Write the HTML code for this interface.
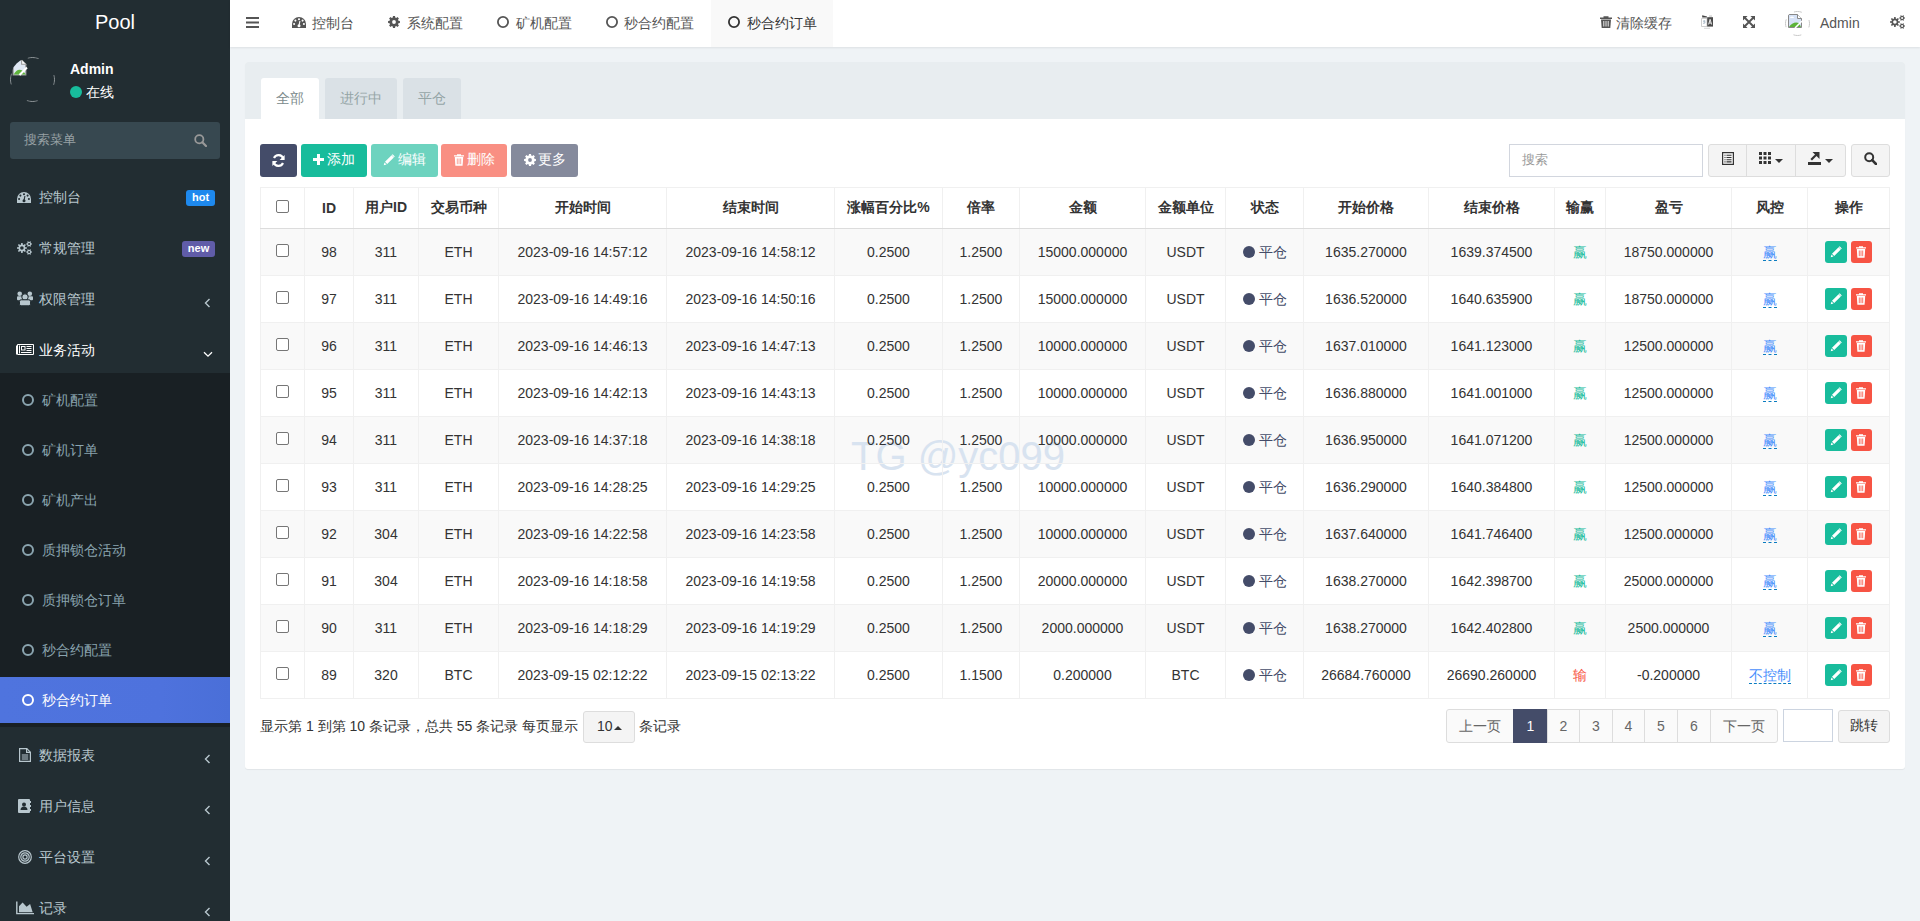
<!DOCTYPE html>
<html><head><meta charset="utf-8"><title>秒合约订单</title>
<style>
*{box-sizing:border-box}
html,body{margin:0;padding:0}
body{width:1920px;height:921px;overflow:hidden;position:relative;background:#eff3f6;font-family:"Liberation Sans",sans-serif;font-size:14px;color:#333}
.abs{position:absolute}
svg{display:block}
/* sidebar */
#sb{position:absolute;left:0;top:0;width:230px;height:921px;background:#222d32}
#sb .logo{position:absolute;left:0;top:0;width:230px;height:47px;color:#fff;font-size:20px;text-align:center;line-height:44px}
.mi{position:absolute;left:0;width:230px;height:46px;color:#b8c7ce;font-size:14px}
.mi .t{position:absolute;left:39px;top:13px;line-height:20px;white-space:nowrap}
.mi .ic{position:absolute;left:17px;top:16px}
.mi .chev{position:absolute;left:203px;top:20px}
.sub{position:absolute;left:0;width:230px;background:#192024}
.si{position:absolute;left:0;width:230px;height:46px;color:#8aa4af;font-size:14px}
.si .t{position:absolute;left:42px;top:13px;line-height:20px;white-space:nowrap}
.si .ci{position:absolute;left:22px;top:17px;width:12px;height:12px;border:2px solid #8aa4af;border-radius:50%}
/* header */
#hd{position:absolute;left:230px;top:0;width:1690px;height:47px;background:#fff;box-shadow:0 1px 2px rgba(0,0,0,.08)}
.ht{position:absolute;top:12.5px;line-height:20px;font-size:14px;color:#555;white-space:nowrap}

/* panel */
#pn{position:absolute;left:245px;top:62px;width:1660px;height:707px;background:#fff;border-radius:3px;box-shadow:0 1px 1px rgba(0,0,0,.06)}
#pn .ph{position:absolute;left:0;top:0;width:1660px;height:57px;background:#e8edf0;border-radius:3px 3px 0 0}
.tab{position:absolute;top:16px;height:41px;background:#dae1e6;border-radius:3px 3px 0 0;color:#95a5a6;font-size:14px;line-height:20px;padding-top:10px;text-align:center}
.btn{position:absolute;top:82px;height:33px;border-radius:3px;color:#fff;font-size:14px;line-height:20px}
table.tb{position:absolute;z-index:2;left:15px;top:125px;border-collapse:collapse;table-layout:fixed;width:1630px}
.tb th,.tb td{border:1px solid #f0f0f0;text-align:center;white-space:nowrap;padding:0;font-size:14px;color:#333}
.tb th{height:41px;font-weight:bold;border-bottom:1px solid #dcdcdc}
.tb td{height:47px}
.tb tr.odd td{background:transparent}
.cb{display:inline-block;width:13px;height:13px;border:1px solid #767676;border-radius:2px;background:#fff;vertical-align:middle;position:relative;top:-3px}
.dot{display:inline-block;width:12px;height:12px;border-radius:50%;background:#444c69;vertical-align:middle;margin-right:4px;position:relative;top:0}
.lk{color:#4a8ffc;border-bottom:1px dashed #0a7cc0;position:relative;top:1px}
.ab{display:inline-block;width:22px;height:22px;border-radius:3px;vertical-align:middle;position:relative}
.ab svg{position:absolute;left:5px;top:5px}
</style></head>
<body>
<div id="sb">
  <div class="logo">Pool</div>
  <!-- user panel -->
  <div class="abs" style="left:10px;top:57px;width:45px;height:45px;border-radius:50%;overflow:hidden">
    <svg class="abs" style="left:0;top:0" width="45" height="45" viewBox="0 0 45 45"><circle cx="22.5" cy="22.5" r="22" fill="none" stroke="#9aa0a3" stroke-width="1" stroke-dasharray="11 23.56" stroke-dashoffset="5.5"/></svg>
    <svg class="abs" style="left:1px;top:2px" width="17" height="17" viewBox="0 0 16 16"><path d="M2 1h8l4 4v10H2z" fill="#dfe7f3" stroke="#999" stroke-width="1"/><path d="M10 1v4h4" fill="#fff" stroke="#999" stroke-width="1"/><path d="M2.5 14.5 Q6 8 11 11 L14 14.5z" fill="#5fb33b"/><path d="M8 15 L15 8" stroke="#fff" stroke-width="2"/></svg>
  </div>
  <div class="abs" style="left:70px;top:60px;color:#fff;font-weight:bold;font-size:14px;line-height:18px">Admin</div>
  <div class="abs" style="left:70px;top:86px;width:12px;height:12px;border-radius:50%;background:#18bc9c"></div>
  <div class="abs" style="left:86px;top:83px;color:#fff;font-size:14px;line-height:18px">在线</div>
  <!-- search -->
  <div class="abs" style="left:10px;top:122px;width:210px;height:37px;background:#374850;border-radius:3px"></div>
  <div class="abs" style="left:24px;top:131px;color:#98a1a5;font-size:13px;line-height:18px">搜索菜单</div>
  <svg class="abs" style="left:194px;top:134px" width="13" height="13" viewBox="0 0 13 13"><circle cx="5.3" cy="5.3" r="4.1" fill="none" stroke="#999" stroke-width="1.8"/><path d="M8.3 8.3 L12 12" stroke="#999" stroke-width="2.2" stroke-linecap="round"/></svg>

  <div class="mi" style="top:174px"><svg class="ic" style="top:18px" width="14" height="11" viewBox="0 0 14 11"><path d="M0 11V7A7 7 0 0 1 14 7V11z" fill="#b8c7ce"/><g fill="#222d32"><circle cx="7" cy="2.2" r="1.05"/><circle cx="3.4" cy="3.6" r="1.05"/><circle cx="10.6" cy="3.6" r="1.05"/><circle cx="2.1" cy="7" r="1.05"/><circle cx="11.9" cy="7" r="1.05"/><circle cx="7" cy="8.7" r="1.5"/></g><path d="M7 8.7L7.9 4" stroke="#222d32" stroke-width="1.1"/></svg><span class="t">控制台</span>
    <div class="abs" style="left:186px;top:16px;width:29px;height:16px;background:#1e89ee;border-radius:3px;color:#fff;font-weight:bold;font-size:11px;line-height:15px;text-align:center">hot</div></div>
  <div class="mi" style="top:225px"><svg class="ic" style="top:16px" width="15" height="14" viewBox="0 0 15 14"><path fill-rule="evenodd" d="M9.84 6.22 L9.84 7.78 L8.30 7.85 L7.90 8.80 L8.95 9.94 L7.84 11.05 L6.70 10.00 L5.75 10.40 L5.68 11.94 L4.12 11.94 L4.05 10.40 L3.10 10.00 L1.96 11.05 L0.85 9.94 L1.90 8.80 L1.50 7.85 L-0.04 7.78 L-0.04 6.22 L1.50 6.15 L1.90 5.20 L0.85 4.06 L1.96 2.95 L3.10 4.00 L4.05 3.60 L4.12 2.06 L5.68 2.06 L5.75 3.60 L6.70 4.00 L7.84 2.95 L8.95 4.06 L7.90 5.20 L8.30 6.15Z M6.70 7.00 A1.8 1.8 0 1 0 3.10 7.00 A1.8 1.8 0 1 0 6.70 7.00Z M14.94 2.40 L14.94 3.60 L13.99 3.64 L13.60 4.32 L14.04 5.16 L13.00 5.76 L12.49 4.96 L11.71 4.96 L11.20 5.76 L10.16 5.16 L10.60 4.32 L10.21 3.64 L9.26 3.60 L9.26 2.40 L10.21 2.36 L10.60 1.68 L10.16 0.84 L11.20 0.24 L11.71 1.04 L12.49 1.04 L13.00 0.24 L14.04 0.84 L13.60 1.68 L13.99 2.36Z M13.10 3.00 A1.0 1.0 0 1 0 11.10 3.00 A1.0 1.0 0 1 0 13.10 3.00Z M14.94 10.40 L14.94 11.60 L13.99 11.64 L13.60 12.32 L14.04 13.16 L13.00 13.76 L12.49 12.96 L11.71 12.96 L11.20 13.76 L10.16 13.16 L10.60 12.32 L10.21 11.64 L9.26 11.60 L9.26 10.40 L10.21 10.36 L10.60 9.68 L10.16 8.84 L11.20 8.24 L11.71 9.04 L12.49 9.04 L13.00 8.24 L14.04 8.84 L13.60 9.68 L13.99 10.36Z M13.10 11.00 A1.0 1.0 0 1 0 11.10 11.00 A1.0 1.0 0 1 0 13.10 11.00Z" fill="#b8c7ce"/></svg><span class="t">常规管理</span>
    <div class="abs" style="left:182px;top:16px;width:33px;height:16px;background:#605ca8;border-radius:3px;color:#fff;font-weight:bold;font-size:11px;line-height:15px;text-align:center">new</div></div>
  <div class="mi" style="top:276px"><svg class="ic" style="left:17px;top:291px;top:15px" width="16" height="15" viewBox="0 0 16 15"><g fill="#b8c7ce"><circle cx="2.7" cy="2.8" r="2.3"/><circle cx="12.8" cy="2.8" r="2.3"/><rect x="0" y="5.2" width="5" height="4" rx="1"/><rect x="11" y="5.2" width="5" height="4" rx="1"/></g><g fill="#b8c7ce" stroke="#222d32" stroke-width="1"><circle cx="8" cy="6" r="3.2"/><rect x="2.5" y="8.8" width="11" height="6" rx="1.6"/></g></svg><span class="t">权限管理</span>
    <svg class="chev" style="left:204px;top:22px" width="7" height="10" viewBox="0 0 7 10"><path d="M5.5 1 L1.5 5 L5.5 9" fill="none" stroke="#b8c7ce" stroke-width="1.4"/></svg></div>
  <div class="mi" style="top:327px;color:#fff"><svg class="ic" style="left:16px;top:16px" width="18" height="13" viewBox="0 0 18 13"><g fill="none" stroke="#fff" stroke-width="1"><path d="M1.5 1.5H17.5V11.5H1.5z"/><path d="M0.5 2.5V11.5"/><path d="M3.5 2.5V10.5"/><rect x="5.5" y="3.5" width="3.5" height="3.5"/><path d="M10.5 3.5H15.5M10.5 5.5H15.5M10.5 7.5H15.5M5 9.5H15.5"/></g></svg><span class="t">业务活动</span>
    <svg class="chev" style="left:203px;top:24px" width="10" height="7" viewBox="0 0 10 7"><path d="M1 1.2 L5 5.2 L9 1.2" fill="none" stroke="#fff" stroke-width="1.3"/></svg></div>
  <div class="sub" style="top:373px;height:354px">
    <div class="si" style="top:4px"><span class="ci"></span><span class="t">矿机配置</span></div>
    <div class="si" style="top:54px"><span class="ci"></span><span class="t">矿机订单</span></div>
    <div class="si" style="top:104px"><span class="ci"></span><span class="t">矿机产出</span></div>
    <div class="si" style="top:154px"><span class="ci"></span><span class="t">质押锁仓活动</span></div>
    <div class="si" style="top:204px"><span class="ci"></span><span class="t">质押锁仓订单</span></div>
    <div class="si" style="top:254px"><span class="ci"></span><span class="t">秒合约配置</span></div>
    <div class="si" style="top:304px;background:linear-gradient(to right,#4f74de 0%,#4e72dd 70%,#4a6fd8 100%);color:#fff"><span class="ci" style="border-color:#fff"></span><span class="t">秒合约订单</span></div>
  </div>
  <div class="mi" style="top:732px"><svg class="ic" style="left:19px;top:16px" width="12" height="14" viewBox="0 0 12 14"><g fill="none" stroke="#b8c7ce" stroke-width="1.2"><path d="M.6.6h7.2l3.6 3.6v9.2H.6z"/><path d="M7.6.6v3.8h3.8"/><path d="M2.8 7h6.4M2.8 9h6.4M2.8 11h6.4" stroke-width="1"/></g></svg><span class="t">数据报表</span>
    <svg class="chev" style="left:204px;top:22px" width="7" height="10" viewBox="0 0 7 10"><path d="M5.5 1 L1.5 5 L5.5 9" fill="none" stroke="#b8c7ce" stroke-width="1.4"/></svg></div>
  <div class="mi" style="top:783px"><svg class="ic" style="left:18px;top:16px" width="13" height="14" viewBox="0 0 13 14"><rect x="0" y="0" width="12" height="14" rx="1" fill="#b8c7ce"/><path d="M12 2h1v2h-1zM12 6h1v2h-1zM12 10h1v2h-1z" fill="#b8c7ce"/><circle cx="6" cy="5.5" r="2" fill="#222d32"/><path d="M2.5 11c0-2.2 1.5-3.5 3.5-3.5s3.5 1.3 3.5 3.5z" fill="#222d32"/></svg><span class="t">用户信息</span>
    <svg class="chev" style="left:204px;top:22px" width="7" height="10" viewBox="0 0 7 10"><path d="M5.5 1 L1.5 5 L5.5 9" fill="none" stroke="#b8c7ce" stroke-width="1.4"/></svg></div>
  <div class="mi" style="top:834px"><svg class="ic" style="left:18px;top:16px" width="14" height="14" viewBox="0 0 14 14"><g fill="none" stroke="#b8c7ce" stroke-width="1.2"><circle cx="7" cy="7" r="6.3"/><circle cx="7" cy="7" r="4.2"/><circle cx="7" cy="7" r="2.1"/></g></svg><span class="t">平台设置</span>
    <svg class="chev" style="left:204px;top:22px" width="7" height="10" viewBox="0 0 7 10"><path d="M5.5 1 L1.5 5 L5.5 9" fill="none" stroke="#b8c7ce" stroke-width="1.4"/></svg></div>
  <div class="mi" style="top:885px"><svg class="ic" style="left:16px;top:16px" width="18" height="14" viewBox="0 0 18 14"><path d="M0.8 0.5V12.6H18" fill="none" stroke="#b8c7ce" stroke-width="1.4"/><path d="M3 11.3V5.3L6.6 1.6L10.6 5.8L14.1 3L16.7 11.3Z" fill="#b8c7ce"/></svg><span class="t">记录</span>
    <svg class="chev" style="left:204px;top:22px" width="7" height="10" viewBox="0 0 7 10"><path d="M5.5 1 L1.5 5 L5.5 9" fill="none" stroke="#b8c7ce" stroke-width="1.4"/></svg></div>
</div>
<div id="hd">
  <svg class="abs" style="left:16px;top:17px" width="13" height="11" viewBox="0 0 13 11"><path d="M0 1h13M0 5.5h13M0 10h13" stroke="#555" stroke-width="2"/></svg>
  <svg class="abs" style="left:62px;top:17px" width="14" height="11" viewBox="0 0 14 11"><path d="M0 11V7A7 7 0 0 1 14 7V11z" fill="#555"/><g fill="#fff"><circle cx="7" cy="2.2" r="1.05"/><circle cx="3.4" cy="3.6" r="1.05"/><circle cx="10.6" cy="3.6" r="1.05"/><circle cx="2.1" cy="7" r="1.05"/><circle cx="11.9" cy="7" r="1.05"/><circle cx="7" cy="8.7" r="1.5"/></g><path d="M7 8.7L7.9 4" stroke="#fff" stroke-width="1.1"/></svg>
  <span class="ht" style="left:82px">控制台</span>
  <svg class="abs" style="left:158px;top:16px" width="12" height="12" viewBox="0 0 12 12"><path fill-rule="evenodd" d="M11.91 4.97 L11.91 7.03 L10.43 7.23 L10.00 8.27 L10.91 9.45 L9.45 10.91 L8.27 10.00 L7.23 10.43 L7.03 11.91 L4.97 11.91 L4.77 10.43 L3.73 10.00 L2.55 10.91 L1.09 9.45 L2.00 8.27 L1.57 7.23 L0.09 7.03 L0.09 4.97 L1.57 4.77 L2.00 3.73 L1.09 2.55 L2.55 1.09 L3.73 2.00 L4.77 1.57 L4.97 0.09 L7.03 0.09 L7.23 1.57 L8.27 2.00 L9.45 1.09 L10.91 2.55 L10.00 3.73 L10.43 4.77Z M7.90 6.00 A1.9 1.9 0 1 0 4.10 6.00 A1.9 1.9 0 1 0 7.90 6.00Z" fill="#555"/></svg>
  <span class="ht" style="left:177px">系统配置</span>
  <svg class="abs" style="left:267px;top:16px" width="12" height="12" viewBox="0 0 12 12"><circle cx="6" cy="6" r="5.1" fill="none" stroke="#555" stroke-width="1.8"/></svg>
  <span class="ht" style="left:286px">矿机配置</span>
  <svg class="abs" style="left:376px;top:16px" width="12" height="12" viewBox="0 0 12 12"><circle cx="6" cy="6" r="5.1" fill="none" stroke="#555" stroke-width="1.8"/></svg>
  <span class="ht" style="left:394px">秒合约配置</span>
  <div class="abs" style="left:481px;top:0;width:122px;height:47px;background:#f9f9f9"></div>
  <svg class="abs" style="left:498px;top:16px" width="12" height="12" viewBox="0 0 12 12"><circle cx="6" cy="6" r="5.1" fill="none" stroke="#333" stroke-width="1.8"/></svg>
  <span class="ht" style="left:517px;color:#333">秒合约订单</span>

  <svg class="abs" style="left:1370px;top:16px" width="12" height="12" viewBox="0 0 12 12"><path d="M3.5 1.5V.3h5v1.2H12V3H0V1.5z" fill="#555"/><path d="M1 3.5h10L10.3 12H1.7z" fill="#555"/><path d="M3.8 5v5.5M6 5v5.5M8.2 5v5.5" stroke="#fff" stroke-width=".9"/></svg>
  <span class="ht" style="left:1386px">清除缓存</span>
  <svg class="abs" style="left:1471px;top:15px" width="13" height="14" viewBox="0 0 13 14"><path d="M.5 3.5h5.5v8H.5z" fill="#fff" stroke="#c8c8c8" stroke-width=".9"/><path d="M1.2 0.2L6 1.6V2.6H1.2z" fill="#444"/><rect x="8" y="0.2" width="3" height="2.2" fill="#ddd"/><path d="M6.2 2.2h5.8v9.4H6.2z" fill="#4a4a4a"/><path d="M7.6 9.5L9.1 4.3 10.6 9.5M8.1 8h2" fill="none" stroke="#e8e8e8" stroke-width="1"/><path d="M2 6.2h2.5M3.2 5v3.3M2.2 8.6l2.3-1" fill="none" stroke="#9ab" stroke-width=".7"/><path d="M3 13.3h6" stroke="#ccc" stroke-width=".8"/></svg>
  <svg class="abs" style="left:1513px;top:16px" width="12" height="12" viewBox="0 0 12 12"><path d="M0 0h4.6L0 4.6zM12 0H7.4L12 4.6zM0 12V7.4L4.6 12zM12 12V7.4L7.4 12z" fill="#555"/><path d="M1.5 1.5L10.5 10.5M10.5 1.5L1.5 10.5" stroke="#555" stroke-width="1.9"/></svg>
  <svg class="abs" style="left:1555px;top:11px" width="25" height="25" viewBox="0 0 25 25"><circle cx="12.5" cy="12.5" r="12" fill="none" stroke="#c8c8c8" stroke-width="1" stroke-dasharray="8 10.85" stroke-dashoffset="4"/></svg>
  <div class="abs" style="left:1555px;top:11px;width:25px;height:25px;border-radius:50%;overflow:hidden">
    <svg class="abs" style="left:2px;top:2px" width="16" height="16" viewBox="0 0 16 16"><path d="M1.5 1.5h9l4 4v9h-13z" fill="#d6e2f6" stroke="#888" stroke-width="1"/><path d="M10.5 1.5v4h4" fill="#fff" stroke="#888" stroke-width="1"/><path d="M3 5a2 1.5 0 0 1 4 0z" fill="#fff"/><path d="M2 14 Q6 8 12 10 L14 14z" fill="#5cb338"/><path d="M8 15 L15 8" stroke="#fff" stroke-width="1.6"/></svg>
  </div>
  <span class="ht" style="left:1590px;top:13px">Admin</span>
  <svg class="abs" style="left:1660px;top:15px" width="15" height="14" viewBox="0 0 15 14"><path fill-rule="evenodd" d="M9.84 6.22 L9.84 7.78 L8.30 7.85 L7.90 8.80 L8.95 9.94 L7.84 11.05 L6.70 10.00 L5.75 10.40 L5.68 11.94 L4.12 11.94 L4.05 10.40 L3.10 10.00 L1.96 11.05 L0.85 9.94 L1.90 8.80 L1.50 7.85 L-0.04 7.78 L-0.04 6.22 L1.50 6.15 L1.90 5.20 L0.85 4.06 L1.96 2.95 L3.10 4.00 L4.05 3.60 L4.12 2.06 L5.68 2.06 L5.75 3.60 L6.70 4.00 L7.84 2.95 L8.95 4.06 L7.90 5.20 L8.30 6.15Z M6.70 7.00 A1.8 1.8 0 1 0 3.10 7.00 A1.8 1.8 0 1 0 6.70 7.00Z M14.94 2.40 L14.94 3.60 L13.99 3.64 L13.60 4.32 L14.04 5.16 L13.00 5.76 L12.49 4.96 L11.71 4.96 L11.20 5.76 L10.16 5.16 L10.60 4.32 L10.21 3.64 L9.26 3.60 L9.26 2.40 L10.21 2.36 L10.60 1.68 L10.16 0.84 L11.20 0.24 L11.71 1.04 L12.49 1.04 L13.00 0.24 L14.04 0.84 L13.60 1.68 L13.99 2.36Z M13.10 3.00 A1.0 1.0 0 1 0 11.10 3.00 A1.0 1.0 0 1 0 13.10 3.00Z M14.94 10.40 L14.94 11.60 L13.99 11.64 L13.60 12.32 L14.04 13.16 L13.00 13.76 L12.49 12.96 L11.71 12.96 L11.20 13.76 L10.16 13.16 L10.60 12.32 L10.21 11.64 L9.26 11.60 L9.26 10.40 L10.21 10.36 L10.60 9.68 L10.16 8.84 L11.20 8.24 L11.71 9.04 L12.49 9.04 L13.00 8.24 L14.04 8.84 L13.60 9.68 L13.99 10.36Z M13.10 11.00 A1.0 1.0 0 1 0 11.10 11.00 A1.0 1.0 0 1 0 13.10 11.00Z" fill="#555"/></svg>
</div>
<div id="pn">
<div class="ph"></div>
<div class="tab" style="left:16px;width:58px;background:#fff;color:#7b8a8b">全部</div>
<div class="tab" style="left:80px;width:72px">进行中</div>
<div class="tab" style="left:158px;width:58px">平仓</div>
<div class="btn" style="left:15px;width:37px;background:#444c69"><svg class="abs" style="left:12px;top:10px" width="13" height="13" viewBox="0 0 13 13"><path d="M11.3 4.6A5 5 0 0 0 2 4" fill="none" stroke="#fff" stroke-width="2.2"/><path d="M12.6 1v5H7.6z" fill="#fff"/><path d="M1.7 8.4A5 5 0 0 0 11 9" fill="none" stroke="#fff" stroke-width="2.2"/><path d="M.4 12V7h5z" fill="#fff"/></svg></div>
<div class="btn" style="left:56px;width:66px;background:#18bc9c"><svg class="abs" style="left:12px;top:10px" width="11" height="11" viewBox="0 0 11 11"><path d="M4 0h3v4h4v3H7v4H4V7H0V4h4z" fill="#fff"/></svg><span class="abs" style="left:26px;top:5px;">添加</span></div>
<div class="btn" style="left:126px;width:67px;background:#6dd3bf"><svg class="abs" style="left:12px;top:10px" width="12" height="12" viewBox="0 0 12 12"><path d="M8.6 1.2l2.2 2.2-6.6 6.6-2.2-2.2z M1.5 8.5l2 2-2.8.8z" fill="#fff"/><path d="M9.2.6l2.2 2.2" stroke="#fff" stroke-width="1.2"/></svg><span class="abs" style="left:27px;top:5px;">编辑</span></div>
<div class="btn" style="left:196px;width:66px;background:#f98f83"><svg class="abs" style="left:13px;top:10px" width="10" height="12" viewBox="0 0 10 12"><path d="M3 1.3V.3h4v1H10v1.3H0V1.3z" fill="#fff"/><path d="M.8 3h8.4l-.6 8.7H1.4z" fill="#fff"/><path d="M3.3 4.5v5.7M5 4.5v5.7M6.7 4.5v5.7" stroke="#f98f83" stroke-width=".8"/></svg><span class="abs" style="left:26px;top:5px;">删除</span></div>
<div class="btn" style="left:266px;width:67px;background:#858a9c"><svg class="abs" style="left:13px;top:10px" width="12" height="12" viewBox="0 0 12 12"><path fill-rule="evenodd" d="M11.91 4.97 L11.91 7.03 L10.43 7.23 L10.00 8.27 L10.91 9.45 L9.45 10.91 L8.27 10.00 L7.23 10.43 L7.03 11.91 L4.97 11.91 L4.77 10.43 L3.73 10.00 L2.55 10.91 L1.09 9.45 L2.00 8.27 L1.57 7.23 L0.09 7.03 L0.09 4.97 L1.57 4.77 L2.00 3.73 L1.09 2.55 L2.55 1.09 L3.73 2.00 L4.77 1.57 L4.97 0.09 L7.03 0.09 L7.23 1.57 L8.27 2.00 L9.45 1.09 L10.91 2.55 L10.00 3.73 L10.43 4.77Z M7.90 6.00 A1.9 1.9 0 1 0 4.10 6.00 A1.9 1.9 0 1 0 7.90 6.00Z" fill="#fff"/></svg><span class="abs" style="left:27px;top:5px;">更多</span></div>
<div class="abs" style="left:1264px;top:82px;width:194px;height:33px;border:1px solid #d2d6de;background:#fff"></div>
<span class="abs" style="left:1277px;top:89px;font-size:13px;line-height:18px;color:#999">搜索</span>
<div class="abs" style="left:1463px;top:82px;width:138px;height:33px;border:1px solid #ddd;border-radius:3px;background:#f4f4f4"></div>
<div class="abs" style="left:1501px;top:82px;width:1px;height:33px;background:#ddd"></div>
<div class="abs" style="left:1550px;top:82px;width:1px;height:33px;background:#ddd"></div>
<div class="abs" style="left:1606px;top:82px;width:39px;height:33px;border:1px solid #ddd;border-radius:3px;background:#f4f4f4"></div>
<svg class="abs" style="left:1477px;top:90px" width="12" height="13" viewBox="0 0 12 13"><rect x=".6" y=".6" width="10.8" height="11.8" fill="none" stroke="#333" stroke-width="1.2"/><path d="M2.5 3.3h1M4.5 3.3h5M2.5 5.5h1M4.5 5.5h5M2.5 7.7h1M4.5 7.7h5M2.5 9.9h1M4.5 9.9h5" stroke="#333" stroke-width="1.1"/></svg>
<svg class="abs" style="left:1514px;top:90px" width="12" height="12" viewBox="0 0 12 12"><path d="M0 0h3v3H0zM4.5 0h3v3h-3zM9 0h3v3H9zM0 4.5h3v3H0zM4.5 4.5h3v3h-3zM9 4.5h3v3H9zM0 9h3v3H0zM4.5 9h3v3h-3zM9 9h3v3H9z" fill="#333"/></svg>
<svg class="abs" style="left:1530px;top:97px" width="8" height="4" viewBox="0 0 8 4"><path d="M0 0h8L4 4z" fill="#333"/></svg>
<svg class="abs" style="left:1563px;top:89px" width="13" height="14" viewBox="0 0 13 14"><path d="M0 11h13v3H0z" fill="#333"/><path d="M3.2 8.8 L9.3 2.7" stroke="#333" stroke-width="2.2"/><path d="M4.5 1h7v7z" fill="#333"/></svg>
<svg class="abs" style="left:1580px;top:97px" width="8" height="4" viewBox="0 0 8 4"><path d="M0 0h8L4 4z" fill="#333"/></svg>
<svg class="abs" style="left:1619px;top:90px" width="13" height="13" viewBox="0 0 13 13"><circle cx="5.2" cy="5.2" r="4" fill="none" stroke="#333" stroke-width="2"/><path d="M8.2 8.2 L12 12" stroke="#333" stroke-width="2.6" stroke-linecap="round"/></svg>
<div class="abs" style="left:15px;top:167px;width:1630px;height:47px;background:#f9f9f9;z-index:0"></div>
<div class="abs" style="left:15px;top:261px;width:1630px;height:47px;background:#f9f9f9;z-index:0"></div>
<div class="abs" style="left:15px;top:355px;width:1630px;height:47px;background:#f9f9f9;z-index:0"></div>
<div class="abs" style="left:15px;top:449px;width:1630px;height:47px;background:#f9f9f9;z-index:0"></div>
<div class="abs" style="left:15px;top:543px;width:1630px;height:47px;background:#f9f9f9;z-index:0"></div>
<table class="tb"><colgroup><col style="width:44px"><col style="width:49px"><col style="width:65px"><col style="width:80px"><col style="width:168px"><col style="width:168px"><col style="width:108px"><col style="width:77px"><col style="width:126px"><col style="width:80px"><col style="width:78px"><col style="width:125px"><col style="width:126px"><col style="width:51px"><col style="width:126px"><col style="width:76px"><col style="width:82px"></colgroup>
<tr><th><span class="cb"></span></th><th>ID</th><th>用户ID</th><th>交易币种</th><th>开始时间</th><th>结束时间</th><th>涨幅百分比%</th><th>倍率</th><th>金额</th><th>金额单位</th><th>状态</th><th>开始价格</th><th>结束价格</th><th>输赢</th><th>盈亏</th><th>风控</th><th>操作</th></tr>
<tr class="odd"><td><span class="cb"></span></td><td>98</td><td>311</td><td>ETH</td><td>2023-09-16 14:57:12</td><td>2023-09-16 14:58:12</td><td>0.2500</td><td>1.2500</td><td>15000.000000</td><td>USDT</td><td><span class="dot"></span><span style="color:#444c69;position:relative;top:1px">平仓</span></td><td>1635.270000</td><td>1639.374500</td><td><span style="color:#18bc9c;position:relative;top:1px">赢</span></td><td>18750.000000</td><td><span class="lk">赢</span></td><td><span class="ab" style="background:#18bc9c"><svg width="12" height="12" viewBox="0 0 12 12"><path d="M8.6 1.2l2.2 2.2-6.6 6.6-2.2-2.2z M1.5 8.5l2 2-2.8.8z" fill="#fff"/><path d="M9.2.6l2.2 2.2" stroke="#fff" stroke-width="1.2"/></svg></span><span class="ab" style="background:#f75444;width:21px;margin-left:4px"><svg width="10" height="12" viewBox="0 0 10 12"><path d="M3 1.3V.3h4v1H10v1.3H0V1.3z" fill="#fff"/><path d="M.8 3h8.4l-.6 8.7H1.4z" fill="#fff"/><path d="M3.3 4.5v5.7M5 4.5v5.7M6.7 4.5v5.7" stroke="#f75444" stroke-width=".8"/></svg></span></td></tr>
<tr><td><span class="cb"></span></td><td>97</td><td>311</td><td>ETH</td><td>2023-09-16 14:49:16</td><td>2023-09-16 14:50:16</td><td>0.2500</td><td>1.2500</td><td>15000.000000</td><td>USDT</td><td><span class="dot"></span><span style="color:#444c69;position:relative;top:1px">平仓</span></td><td>1636.520000</td><td>1640.635900</td><td><span style="color:#18bc9c;position:relative;top:1px">赢</span></td><td>18750.000000</td><td><span class="lk">赢</span></td><td><span class="ab" style="background:#18bc9c"><svg width="12" height="12" viewBox="0 0 12 12"><path d="M8.6 1.2l2.2 2.2-6.6 6.6-2.2-2.2z M1.5 8.5l2 2-2.8.8z" fill="#fff"/><path d="M9.2.6l2.2 2.2" stroke="#fff" stroke-width="1.2"/></svg></span><span class="ab" style="background:#f75444;width:21px;margin-left:4px"><svg width="10" height="12" viewBox="0 0 10 12"><path d="M3 1.3V.3h4v1H10v1.3H0V1.3z" fill="#fff"/><path d="M.8 3h8.4l-.6 8.7H1.4z" fill="#fff"/><path d="M3.3 4.5v5.7M5 4.5v5.7M6.7 4.5v5.7" stroke="#f75444" stroke-width=".8"/></svg></span></td></tr>
<tr class="odd"><td><span class="cb"></span></td><td>96</td><td>311</td><td>ETH</td><td>2023-09-16 14:46:13</td><td>2023-09-16 14:47:13</td><td>0.2500</td><td>1.2500</td><td>10000.000000</td><td>USDT</td><td><span class="dot"></span><span style="color:#444c69;position:relative;top:1px">平仓</span></td><td>1637.010000</td><td>1641.123000</td><td><span style="color:#18bc9c;position:relative;top:1px">赢</span></td><td>12500.000000</td><td><span class="lk">赢</span></td><td><span class="ab" style="background:#18bc9c"><svg width="12" height="12" viewBox="0 0 12 12"><path d="M8.6 1.2l2.2 2.2-6.6 6.6-2.2-2.2z M1.5 8.5l2 2-2.8.8z" fill="#fff"/><path d="M9.2.6l2.2 2.2" stroke="#fff" stroke-width="1.2"/></svg></span><span class="ab" style="background:#f75444;width:21px;margin-left:4px"><svg width="10" height="12" viewBox="0 0 10 12"><path d="M3 1.3V.3h4v1H10v1.3H0V1.3z" fill="#fff"/><path d="M.8 3h8.4l-.6 8.7H1.4z" fill="#fff"/><path d="M3.3 4.5v5.7M5 4.5v5.7M6.7 4.5v5.7" stroke="#f75444" stroke-width=".8"/></svg></span></td></tr>
<tr><td><span class="cb"></span></td><td>95</td><td>311</td><td>ETH</td><td>2023-09-16 14:42:13</td><td>2023-09-16 14:43:13</td><td>0.2500</td><td>1.2500</td><td>10000.000000</td><td>USDT</td><td><span class="dot"></span><span style="color:#444c69;position:relative;top:1px">平仓</span></td><td>1636.880000</td><td>1641.001000</td><td><span style="color:#18bc9c;position:relative;top:1px">赢</span></td><td>12500.000000</td><td><span class="lk">赢</span></td><td><span class="ab" style="background:#18bc9c"><svg width="12" height="12" viewBox="0 0 12 12"><path d="M8.6 1.2l2.2 2.2-6.6 6.6-2.2-2.2z M1.5 8.5l2 2-2.8.8z" fill="#fff"/><path d="M9.2.6l2.2 2.2" stroke="#fff" stroke-width="1.2"/></svg></span><span class="ab" style="background:#f75444;width:21px;margin-left:4px"><svg width="10" height="12" viewBox="0 0 10 12"><path d="M3 1.3V.3h4v1H10v1.3H0V1.3z" fill="#fff"/><path d="M.8 3h8.4l-.6 8.7H1.4z" fill="#fff"/><path d="M3.3 4.5v5.7M5 4.5v5.7M6.7 4.5v5.7" stroke="#f75444" stroke-width=".8"/></svg></span></td></tr>
<tr class="odd"><td><span class="cb"></span></td><td>94</td><td>311</td><td>ETH</td><td>2023-09-16 14:37:18</td><td>2023-09-16 14:38:18</td><td>0.2500</td><td>1.2500</td><td>10000.000000</td><td>USDT</td><td><span class="dot"></span><span style="color:#444c69;position:relative;top:1px">平仓</span></td><td>1636.950000</td><td>1641.071200</td><td><span style="color:#18bc9c;position:relative;top:1px">赢</span></td><td>12500.000000</td><td><span class="lk">赢</span></td><td><span class="ab" style="background:#18bc9c"><svg width="12" height="12" viewBox="0 0 12 12"><path d="M8.6 1.2l2.2 2.2-6.6 6.6-2.2-2.2z M1.5 8.5l2 2-2.8.8z" fill="#fff"/><path d="M9.2.6l2.2 2.2" stroke="#fff" stroke-width="1.2"/></svg></span><span class="ab" style="background:#f75444;width:21px;margin-left:4px"><svg width="10" height="12" viewBox="0 0 10 12"><path d="M3 1.3V.3h4v1H10v1.3H0V1.3z" fill="#fff"/><path d="M.8 3h8.4l-.6 8.7H1.4z" fill="#fff"/><path d="M3.3 4.5v5.7M5 4.5v5.7M6.7 4.5v5.7" stroke="#f75444" stroke-width=".8"/></svg></span></td></tr>
<tr><td><span class="cb"></span></td><td>93</td><td>311</td><td>ETH</td><td>2023-09-16 14:28:25</td><td>2023-09-16 14:29:25</td><td>0.2500</td><td>1.2500</td><td>10000.000000</td><td>USDT</td><td><span class="dot"></span><span style="color:#444c69;position:relative;top:1px">平仓</span></td><td>1636.290000</td><td>1640.384800</td><td><span style="color:#18bc9c;position:relative;top:1px">赢</span></td><td>12500.000000</td><td><span class="lk">赢</span></td><td><span class="ab" style="background:#18bc9c"><svg width="12" height="12" viewBox="0 0 12 12"><path d="M8.6 1.2l2.2 2.2-6.6 6.6-2.2-2.2z M1.5 8.5l2 2-2.8.8z" fill="#fff"/><path d="M9.2.6l2.2 2.2" stroke="#fff" stroke-width="1.2"/></svg></span><span class="ab" style="background:#f75444;width:21px;margin-left:4px"><svg width="10" height="12" viewBox="0 0 10 12"><path d="M3 1.3V.3h4v1H10v1.3H0V1.3z" fill="#fff"/><path d="M.8 3h8.4l-.6 8.7H1.4z" fill="#fff"/><path d="M3.3 4.5v5.7M5 4.5v5.7M6.7 4.5v5.7" stroke="#f75444" stroke-width=".8"/></svg></span></td></tr>
<tr class="odd"><td><span class="cb"></span></td><td>92</td><td>304</td><td>ETH</td><td>2023-09-16 14:22:58</td><td>2023-09-16 14:23:58</td><td>0.2500</td><td>1.2500</td><td>10000.000000</td><td>USDT</td><td><span class="dot"></span><span style="color:#444c69;position:relative;top:1px">平仓</span></td><td>1637.640000</td><td>1641.746400</td><td><span style="color:#18bc9c;position:relative;top:1px">赢</span></td><td>12500.000000</td><td><span class="lk">赢</span></td><td><span class="ab" style="background:#18bc9c"><svg width="12" height="12" viewBox="0 0 12 12"><path d="M8.6 1.2l2.2 2.2-6.6 6.6-2.2-2.2z M1.5 8.5l2 2-2.8.8z" fill="#fff"/><path d="M9.2.6l2.2 2.2" stroke="#fff" stroke-width="1.2"/></svg></span><span class="ab" style="background:#f75444;width:21px;margin-left:4px"><svg width="10" height="12" viewBox="0 0 10 12"><path d="M3 1.3V.3h4v1H10v1.3H0V1.3z" fill="#fff"/><path d="M.8 3h8.4l-.6 8.7H1.4z" fill="#fff"/><path d="M3.3 4.5v5.7M5 4.5v5.7M6.7 4.5v5.7" stroke="#f75444" stroke-width=".8"/></svg></span></td></tr>
<tr><td><span class="cb"></span></td><td>91</td><td>304</td><td>ETH</td><td>2023-09-16 14:18:58</td><td>2023-09-16 14:19:58</td><td>0.2500</td><td>1.2500</td><td>20000.000000</td><td>USDT</td><td><span class="dot"></span><span style="color:#444c69;position:relative;top:1px">平仓</span></td><td>1638.270000</td><td>1642.398700</td><td><span style="color:#18bc9c;position:relative;top:1px">赢</span></td><td>25000.000000</td><td><span class="lk">赢</span></td><td><span class="ab" style="background:#18bc9c"><svg width="12" height="12" viewBox="0 0 12 12"><path d="M8.6 1.2l2.2 2.2-6.6 6.6-2.2-2.2z M1.5 8.5l2 2-2.8.8z" fill="#fff"/><path d="M9.2.6l2.2 2.2" stroke="#fff" stroke-width="1.2"/></svg></span><span class="ab" style="background:#f75444;width:21px;margin-left:4px"><svg width="10" height="12" viewBox="0 0 10 12"><path d="M3 1.3V.3h4v1H10v1.3H0V1.3z" fill="#fff"/><path d="M.8 3h8.4l-.6 8.7H1.4z" fill="#fff"/><path d="M3.3 4.5v5.7M5 4.5v5.7M6.7 4.5v5.7" stroke="#f75444" stroke-width=".8"/></svg></span></td></tr>
<tr class="odd"><td><span class="cb"></span></td><td>90</td><td>311</td><td>ETH</td><td>2023-09-16 14:18:29</td><td>2023-09-16 14:19:29</td><td>0.2500</td><td>1.2500</td><td>2000.000000</td><td>USDT</td><td><span class="dot"></span><span style="color:#444c69;position:relative;top:1px">平仓</span></td><td>1638.270000</td><td>1642.402800</td><td><span style="color:#18bc9c;position:relative;top:1px">赢</span></td><td>2500.000000</td><td><span class="lk">赢</span></td><td><span class="ab" style="background:#18bc9c"><svg width="12" height="12" viewBox="0 0 12 12"><path d="M8.6 1.2l2.2 2.2-6.6 6.6-2.2-2.2z M1.5 8.5l2 2-2.8.8z" fill="#fff"/><path d="M9.2.6l2.2 2.2" stroke="#fff" stroke-width="1.2"/></svg></span><span class="ab" style="background:#f75444;width:21px;margin-left:4px"><svg width="10" height="12" viewBox="0 0 10 12"><path d="M3 1.3V.3h4v1H10v1.3H0V1.3z" fill="#fff"/><path d="M.8 3h8.4l-.6 8.7H1.4z" fill="#fff"/><path d="M3.3 4.5v5.7M5 4.5v5.7M6.7 4.5v5.7" stroke="#f75444" stroke-width=".8"/></svg></span></td></tr>
<tr><td><span class="cb"></span></td><td>89</td><td>320</td><td>BTC</td><td>2023-09-15 02:12:22</td><td>2023-09-15 02:13:22</td><td>0.2500</td><td>1.1500</td><td>0.200000</td><td>BTC</td><td><span class="dot"></span><span style="color:#444c69;position:relative;top:1px">平仓</span></td><td>26684.760000</td><td>26690.260000</td><td><span style="color:#f75444;position:relative;top:1px">输</span></td><td>-0.200000</td><td><span class="lk">不控制</span></td><td><span class="ab" style="background:#18bc9c"><svg width="12" height="12" viewBox="0 0 12 12"><path d="M8.6 1.2l2.2 2.2-6.6 6.6-2.2-2.2z M1.5 8.5l2 2-2.8.8z" fill="#fff"/><path d="M9.2.6l2.2 2.2" stroke="#fff" stroke-width="1.2"/></svg></span><span class="ab" style="background:#f75444;width:21px;margin-left:4px"><svg width="10" height="12" viewBox="0 0 10 12"><path d="M3 1.3V.3h4v1H10v1.3H0V1.3z" fill="#fff"/><path d="M.8 3h8.4l-.6 8.7H1.4z" fill="#fff"/><path d="M3.3 4.5v5.7M5 4.5v5.7M6.7 4.5v5.7" stroke="#f75444" stroke-width=".8"/></svg></span></td></tr>
</table>
<span class="abs" style="left:15px;top:655px;line-height:18px;color:#333">显示第 1 到第 10 条记录，总共 55 条记录 每页显示</span>
<div class="abs" style="left:338px;top:649px;width:52px;height:32px;border:1px solid #ddd;border-radius:3px;background:#f4f4f4"></div>
<span class="abs" style="left:352px;top:655px;line-height:18px;color:#333">10</span>
<svg class="abs" style="left:369px;top:664px" width="8" height="4" viewBox="0 0 8 4"><path d="M0 4h8L4 0z" fill="#333"/></svg>
<span class="abs" style="left:394px;top:655px;line-height:18px;color:#333">条记录</span>
<div class="abs" style="left:1201px;top:647px;width:332px;height:34px;border:1px solid #ddd;border-radius:3px;background:#fafafa"></div>
<div class="abs" style="left:1201px;top:647px;width:68px;height:34px;color:#666;text-align:center;line-height:34px">上一页</div>
<div class="abs" style="left:1268px;top:647px;width:35px;height:34px;background:#444c69;color:#fff;text-align:center;line-height:34px">1</div>
<div class="abs" style="left:1302px;top:647px;width:33px;height:34px;color:#666;text-align:center;line-height:34px">2</div>
<div class="abs" style="left:1302px;top:647px;width:1px;height:34px;background:#ddd"></div>
<div class="abs" style="left:1334px;top:647px;width:34px;height:34px;color:#666;text-align:center;line-height:34px">3</div>
<div class="abs" style="left:1334px;top:647px;width:1px;height:34px;background:#ddd"></div>
<div class="abs" style="left:1367px;top:647px;width:33px;height:34px;color:#666;text-align:center;line-height:34px">4</div>
<div class="abs" style="left:1367px;top:647px;width:1px;height:34px;background:#ddd"></div>
<div class="abs" style="left:1399px;top:647px;width:34px;height:34px;color:#666;text-align:center;line-height:34px">5</div>
<div class="abs" style="left:1399px;top:647px;width:1px;height:34px;background:#ddd"></div>
<div class="abs" style="left:1432px;top:647px;width:34px;height:34px;color:#666;text-align:center;line-height:34px">6</div>
<div class="abs" style="left:1432px;top:647px;width:1px;height:34px;background:#ddd"></div>
<div class="abs" style="left:1465px;top:647px;width:68px;height:34px;color:#666;text-align:center;line-height:34px">下一页</div>
<div class="abs" style="left:1465px;top:647px;width:1px;height:34px;background:#ddd"></div>
<div class="abs" style="left:1538px;top:647px;width:50px;height:33px;border:1px solid #ccd4e0;background:#fff"></div>
<div class="abs" style="left:1593px;top:648px;width:52px;height:33px;border:1px solid #ddd;border-radius:3px;background:#f4f4f4;color:#333;text-align:center;line-height:29px">跳转</div>
<div class="abs" style="left:606px;top:371px;font-size:40px;line-height:46px;color:#d8e3f0;white-space:nowrap;z-index:1;pointer-events:none">TG @yc099</div>
</div>
</body></html>
